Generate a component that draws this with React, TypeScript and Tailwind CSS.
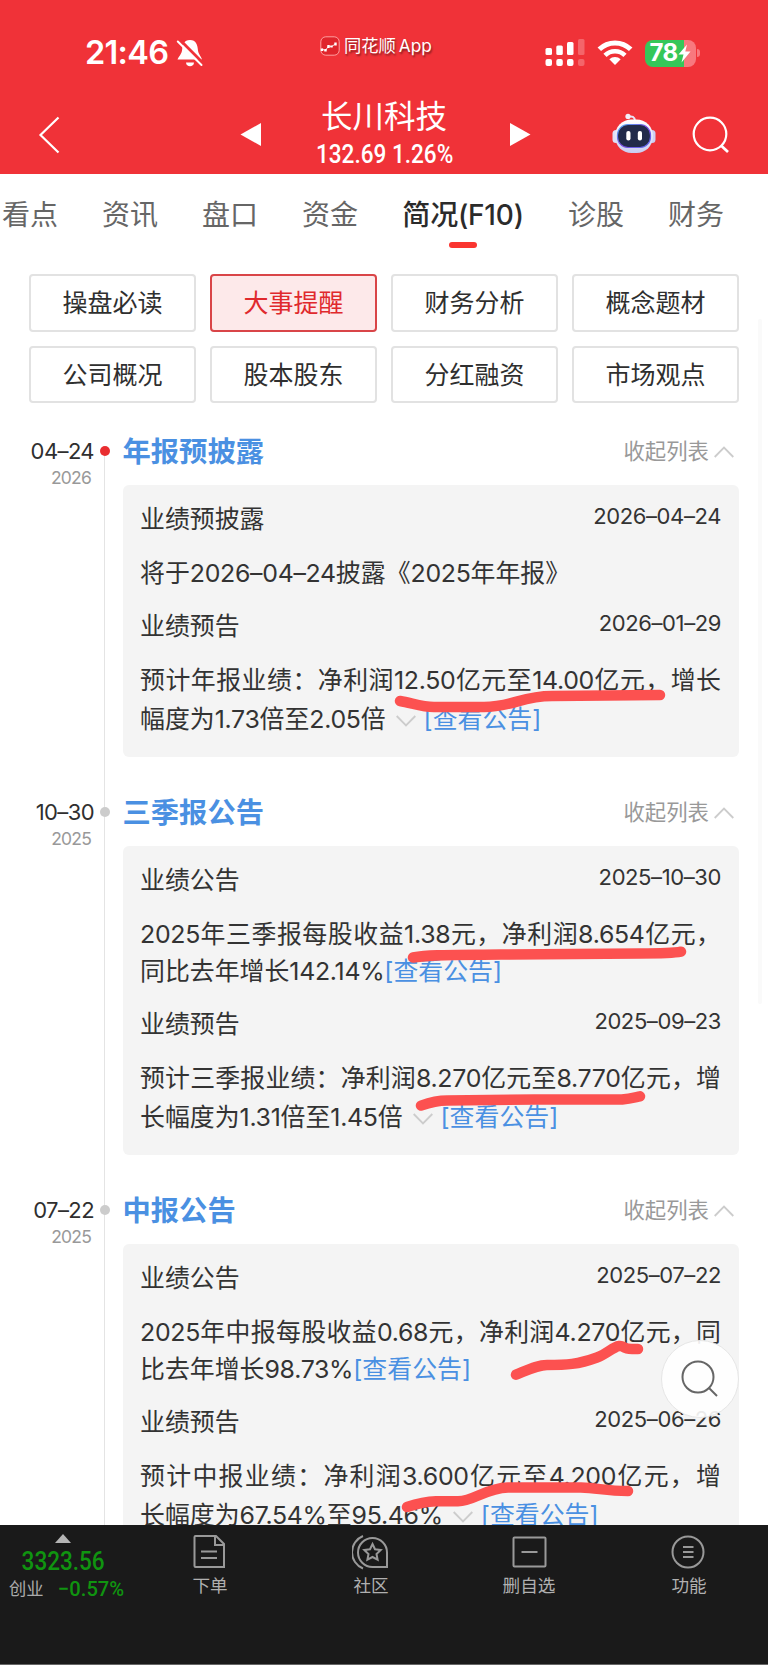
import { Fragment, type ReactNode } from 'react';
import clsx from 'clsx';

type Entry = {
  name: string;
  date: string;
  lines: string[];
  expandable?: boolean;
  link?: boolean;
};

type Section = {
  day: string;
  year: string;
  title: string;
  active?: boolean;
  entries: Entry[];
};

const TABS = ['看点', '资讯', '盘口', '资金', '简况(F10)', '诊股', '财务'];
const ACTIVE_TAB = '简况(F10)';

const FILTERS = ['操盘必读', '大事提醒', '财务分析', '概念题材', '公司概况', '股本股东', '分红融资', '市场观点'];
const ACTIVE_FILTER = '大事提醒';

const SECTIONS: Section[] = [
  {
    day: '04–24',
    year: '2026',
    title: '年报预披露',
    active: true,
    entries: [
      { name: '业绩预披露', date: '2026–04–24', lines: ['将于2026–04–24披露《2025年年报》'] },
      {
        name: '业绩预告',
        date: '2026–01–29',
        lines: ['预计年报业绩：净利润12.50亿元至14.00亿元，增长', '幅度为1.73倍至2.05倍'],
        expandable: true,
        link: true,
      },
    ],
  },
  {
    day: '10–30',
    year: '2025',
    title: '三季报公告',
    entries: [
      {
        name: '业绩公告',
        date: '2025–10–30',
        lines: ['2025年三季报每股收益1.38元，净利润8.654亿元，', '同比去年增长142.14%'],
        link: true,
      },
      {
        name: '业绩预告',
        date: '2025–09–23',
        lines: ['预计三季报业绩：净利润8.270亿元至8.770亿元，增', '长幅度为1.31倍至1.45倍'],
        expandable: true,
        link: true,
      },
    ],
  },
  {
    day: '07–22',
    year: '2025',
    title: '中报公告',
    entries: [
      {
        name: '业绩公告',
        date: '2025–07–22',
        lines: ['2025年中报每股收益0.68元，净利润4.270亿元，同', '比去年增长98.73%'],
        link: true,
      },
      {
        name: '业绩预告',
        date: '2025–06–26',
        lines: ['预计中报业绩：净利润3.600亿元至4.200亿元，增', '长幅度为67.54%至95.46%'],
        expandable: true,
        link: true,
      },
    ],
  },
];

// Hand-drawn marker strokes over the key figures
const MARKS = [
  'M400 701 C412 703 422 707 434 707 H484 C512 707 522 696 552 696 L660 695',
  'M413 957.5 C430 954.5 450 955 501 954.5 L640 953.5 C660 953.5 672 953.5 681 951.7',
  'M421 1105.6 C430 1102.5 438 1100.6 447 1100.6 L535 1099.5 H622 C630 1098.5 634 1097.5 640 1096.3',
  'M516 1374.7 C530 1369 538 1365 547 1365 C566 1365 578 1364.5 597 1357.5 C607 1354 613 1347 619 1346 C624 1345 622 1349 632 1349 H638',
  'M407 1507 C416 1504 428 1501.5 436 1501.3 H458 C474 1501 486 1488 508 1487.5 H581 C598 1488 606 1491 628 1491',
];

/* Latin digits set a little tighter than the Chinese text around them */
const Mixed = ({ text }: { text: string }) => (
  <>
    {text.split(/([\d.%–]+)/).map((part, i) =>
      i % 2 ? (
        <span key={i} className="tracking-[-0.012em]">{part}</span>
      ) : (
        <Fragment key={i}>{part}</Fragment>
      )
    )}
  </>
);

const StatusBar = () => (
  <div className="flex h-[52px] items-center">
    <span className="ml-[85px] w-[86px] text-[32.5px] leading-none font-semibold tracking-[-0.7px]">21:46</span>
    <svg className="ml-[5px] h-[28px] w-[28px]" viewBox="0 0 28 28">
      <path d="M14 1 C8 1 6.5 6 6.2 10 C6 15 3 17 1.5 20.5 H26 C25 17 22 15 21.8 10 C21.5 6 20 1 14 1Z" fill="#fff" />
      <path d="M10 23.5 H18 C18 26 16 27.3 14 27.3 C12 27.3 10 26 10 23.5Z" fill="#fff" />
      <path d="M3 0 L28 25" stroke="#f03238" strokeWidth="3" />
      <path d="M1.8 2.5 L25.5 26" stroke="#fff" strokeWidth="2" strokeLinecap="round" />
    </svg>
    <div className="mb-[15px] ml-[116px] flex items-center gap-[4px] self-center">
      <svg className="h-[20px] w-[20px]" viewBox="0 0 20 20">
        <rect x="0.8" y="0.8" width="18.4" height="18.4" rx="5" fill="#e0252c" stroke="#ffa0a0" />
        <path d="M2 12.5 V15 M5.5 13 V15.5 M8.5 9 V12 M11.5 9.5 V11.5 M15.5 6.5 V9.5" stroke="#fff" strokeWidth="2.4" />
        <path d="M2 13 L5.5 14.5 L8.5 10 L11.5 10.5 L15.5 8" stroke="#fff" strokeWidth="0.8" fill="none" />
      </svg>
      <span className="text-[17.3px] leading-none whitespace-nowrap [word-spacing:-2px] [text-shadow:1px_2px_2px_rgba(0,0,0,0.45)]">
        同花顺 App
      </span>
    </div>
    <svg className="ml-auto h-[28px] w-[40px]" viewBox="0 0 40 28" fill="#fff">
      <rect x="0.5" y="9" width="6.5" height="7" rx="1.5" />
      <rect x="11.3" y="6.5" width="6.5" height="9.5" rx="1.5" />
      <rect x="22" y="3" width="6.5" height="13" rx="1.5" />
      <rect x="33" y="0" width="6.5" height="16" rx="1.5" opacity="0.25" />
      <rect x="0.5" y="20" width="6.5" height="7" rx="2" />
      <rect x="11.3" y="20" width="6.5" height="7" rx="2" />
      <rect x="22" y="20" width="6.5" height="7" rx="2" />
      <rect x="33" y="20" width="6.5" height="7" rx="2" opacity="0.25" />
    </svg>
    <svg className="ml-[12px] h-[26px] w-[36px]" viewBox="0 0 36 26" fill="none" stroke="#fff">
      <path d="M2.3 9.3 A22.5 22.5 0 0 1 33.7 9.3" strokeWidth="5" />
      <path d="M8 15.3 A14.3 14.3 0 0 1 28 15.3" strokeWidth="4.6" />
      <path d="M18 25 L12.3 19.3 A8.2 8.2 0 0 1 23.7 19.3 Z" fill="#fff" stroke="none" />
    </svg>
    <div className="mr-[68px] ml-[12px] flex items-center">
      <div className="flex h-[27px] w-[51px] items-center overflow-hidden rounded-[8px] bg-linear-to-r from-[#35c759] from-77% to-[#f8787e] to-77% pl-[5px]">
        <span className="text-[24px] leading-none font-bold tracking-[-0.6px]">78</span>
        <svg className="h-[19px] w-[13px] shrink-0" viewBox="0 0 13 19">
          <path d="M9 0.5 L0.5 10.5 H5.5 L3.5 18.5 L12.5 7.5 H7.3 Z" fill="#fff" />
        </svg>
      </div>
      <div className="ml-[1.5px] h-[8px] w-[3px] rounded-r-[3px] bg-[#f8787e]" />
    </div>
  </div>
);

const Robot = () => (
  <svg className="h-[41px] w-[44px]" viewBox="0 0 44 41">
    <defs>
      <linearGradient id="shell" x1="0" y1="0" x2="0" y2="1">
        <stop offset="0" stopColor="#ffffff" />
        <stop offset="1" stopColor="#c9cdf2" />
      </linearGradient>
      <linearGradient id="rim" x1="0" y1="0" x2="1" y2="1">
        <stop offset="0" stopColor="#4fb2f5" />
        <stop offset="0.5" stopColor="#7c4be0" />
        <stop offset="1" stopColor="#5a6df0" />
      </linearGradient>
    </defs>
    <path d="M15.5 4 C20 2.5 23 4 23 8" fill="none" stroke="#e8e4f6" strokeWidth="2" />
    <circle cx="16" cy="3.4" r="2.6" fill="#f3effa" />
    <rect x="0.5" y="17" width="7" height="13" rx="3.5" fill="#dfe0f8" />
    <rect x="36.5" y="17" width="7" height="13" rx="3.5" fill="#cdd0f4" />
    <rect x="3" y="6.5" width="38" height="33.5" rx="16.5" fill="url(#shell)" />
    <rect x="5.5" y="11.5" width="33" height="23" rx="10.5" fill="#212a4a" stroke="url(#rim)" strokeWidth="1.2" />
    <rect x="14.3" y="18" width="4.2" height="9.5" rx="2" fill="#fff" />
    <rect x="25.8" y="18" width="4.2" height="9.5" rx="2" fill="#fff" />
  </svg>
);

const Header = () => (
  <header className="flex h-[174px] shrink-0 flex-col bg-[#f03238] pt-[27px] text-white">
    <StatusBar />
    <div className="flex items-start pt-[16px]">
      <svg className="mt-[20px] ml-[38px] h-[40px] w-[24px] shrink-0" viewBox="0 0 24 40">
        <path d="M20.5 2.5 L2.5 20 L20.5 37.5" fill="none" stroke="#fff" strokeWidth="2.2" />
      </svg>
      <svg className="mt-[27.5px] ml-[178px] h-[23px] w-[21px] shrink-0" viewBox="0 0 21 23">
        <path d="M0.5 11.5 L21 0 V23 Z" fill="#fff" />
      </svg>
      <div className="ml-[44px] flex w-[160px] flex-col items-center pt-px">
        <h1 className="mr-[2px] text-[31.5px] leading-[42px] whitespace-nowrap">长川科技</h1>
        <p className="mt-[2px] scale-x-[0.885] font-[Roboto] text-[25.5px] leading-[28px] font-medium whitespace-nowrap">132.69 1.26%</p>
      </div>
      <svg className="mt-[27.5px] ml-[45px] h-[23px] w-[21px] shrink-0" viewBox="0 0 21 23">
        <path d="M20.5 11.5 L0 0 V23 Z" fill="#fff" />
      </svg>
      <div className="mt-[18px] ml-[81px]">
        <Robot />
      </div>
      <svg className="mt-[20px] ml-[35px] h-[40px] w-[40px]" viewBox="0 0 40 40" fill="none" stroke="#fff" strokeWidth="2.2">
        <circle cx="19" cy="19" r="16.3" />
        <path d="M30 30.5 L37 37" strokeWidth="2.8" />
      </svg>
    </div>
  </header>
);

const Tabs = () => (
  <nav className="flex h-[86px] items-start gap-[44px] pt-[21px] pl-[2px] text-[28px] leading-[40px] text-[#666]">
    {TABS.map(tab => (
      <div key={tab} className="flex shrink-0 flex-col items-center">
        {tab === ACTIVE_TAB ? (
          <>
            <span className="w-[122px] text-center font-medium tracking-[-0.2px] whitespace-nowrap text-[#2b2b2b]">{tab}</span>
            <span className="mt-[7px] h-[6px] w-[28px] rounded-[3px] bg-[#fa3530]" />
          </>
        ) : (
          <span>{tab}</span>
        )}
      </div>
    ))}
  </nav>
);

const Filters = () => (
  <div className="mt-[14px] grid grid-cols-4 gap-x-[14.3px] gap-y-[14px] px-[29px]">
    {FILTERS.map(label => (
      <button
        key={label}
        className={clsx(
          'h-[57.5px] rounded-[4px] border-2 pt-[2px] text-[25px] leading-none',
          label === ACTIVE_FILTER ? 'border-[#d94548] bg-[#fde9ea] text-[#e0292d]' : 'border-[#e2e2e2] text-[#2f2f2f]'
        )}
      >
        {label}
      </button>
    ))}
  </div>
);

const Chevron = ({ up, className }: { up?: boolean; className?: string }) => (
  <svg className={clsx('h-[12px] w-[20px]', className)} viewBox="0 0 20 12">
    <path d={up ? 'M0.7 11 L10 1.5 L19.3 11' : 'M0.7 1 L10 10.5 L19.3 1'} fill="none" stroke="#ccc" strokeWidth="1.8" />
  </svg>
);

const EntryBlock = ({ entry }: { entry: Entry }) => {
  const last = entry.lines.length - 1;
  return (
    <>
      <div className="flex items-center justify-between leading-[37px]">
        <h3>{entry.name}</h3>
        <time className="mb-[6px] text-[22px] leading-[31px] tracking-[-0.4px]">{entry.date}</time>
      </div>
      <div className={clsx(entry.expandable && 'pb-[2px]')}>
        {entry.lines.map((line, i) => (
          <p
            key={line}
            className={clsx(
              'h-[37px] leading-[37px] whitespace-nowrap',
              i < last && '[text-align-last:justify]',
              i === last && entry.expandable && 'mt-[2px]'
            )}
          >
            <Mixed text={line} />
            {i === last && entry.expandable && <Chevron className="mr-[8px] ml-[10px] inline-block align-[1px]" />}
            {i === last && entry.link && <a className="text-[#4a90e2]">[查看公告]</a>}
          </p>
        ))}
      </div>
    </>
  );
};

const TimelineSection = ({ section }: { section: Section }) => (
  <section className="mb-[21.5px] flex">
    <div className="relative flex w-[122.5px] shrink-0 flex-col pt-[18.5px]">
      <span
        className={clsx(
          'absolute top-[28.5px] left-[99.5px] h-[10.5px] w-[10.5px] rounded-full',
          section.active ? 'bg-[#e92d30]' : 'bg-[#ccc]'
        )}
      />
      <span className="w-[94px] text-right text-[22px] leading-[30px] tracking-[-0.6px] text-[#2f2f2f]">{section.day}</span>
      <span className="mt-px w-[91px] text-right text-[17.5px] leading-[22px] tracking-[-0.8px] text-[#999]">{section.year}</span>
    </div>
    <div className="flex-1 pr-[29px]">
      <div className="flex h-[68px] items-center justify-between">
        <h2 className="pt-[2px] text-[28.3px] font-bold text-[#4a90e2]">{section.title}</h2>
        <button className="mr-[5px] flex items-center gap-[5px] text-[21.4px] text-[#999]">
          收起列表
          <Chevron up className="mt-[2px]" />
        </button>
      </div>
      <div className="flex flex-col gap-[16.5px] rounded-[6px] bg-[#f4f4f4] pt-[16px] pr-[18px] pb-[17px] pl-[17.5px] text-[24.9px] text-[#333]">
        {section.entries.map(entry => (
          <EntryBlock key={entry.name} entry={entry} />
        ))}
      </div>
    </div>
  </section>
);

const NavItem = ({ label, className, children }: { label: string; className: string; children: ReactNode }) => (
  <button className={clsx('flex w-[80px] flex-col items-center pt-[9px]', className)}>
    <svg className="h-[36px] w-[38px]" viewBox="0 0 38 36" fill="none" stroke="#999" strokeWidth="2">
      {children}
    </svg>
    <span className="mt-[5px] text-[17.6px] leading-[22px] text-[#b0b0b0]">{label}</span>
  </button>
);

const BottomBar = () => (
  <footer className="flex h-[140px] shrink-0 items-start border-b border-[#666] bg-[#1a1a1a]">
    <div className="flex w-[126px] shrink-0 flex-col items-center pt-[9px]">
      <svg className="h-[9px] w-[16px]" viewBox="0 0 16 9">
        <path d="M0 9 L8 0 L16 9 Z" fill="#b5b5b5" />
      </svg>
      <span className="mt-[5px] scale-x-[0.9] font-[Roboto] text-[25px] leading-[27px] font-medium text-[#109410]">3323.56</span>
      <div className="flex items-center self-stretch pt-px pl-[9px] leading-[26px] whitespace-nowrap">
        <span className="text-[17.3px] text-[#aaa]">创业</span>
        <span className="ml-[14px] origin-left scale-x-[0.96] font-[Roboto] text-[21px] font-medium text-[#109410]">−0.57%</span>
      </div>
    </div>
    <NavItem label="下单" className="ml-[44px]">
      <path d="M4.5 2 H25 L33 10 V33 H4.5 Q3.5 33 3.5 32 V3 Q3.5 2 4.5 2 Z M24 2 V11 H33 M10 17.5 H26 M10 24 H26" />
    </NavItem>
    <NavItem label="社区" className="ml-[81px]">
      <path d="M34.5 33 H20.5 A14.5 14.5 0 1 1 35 18.5 V33 Z" />
      <path d="M11 2 A17.5 17.5 0 0 0 11 34.5" />
      <path d="M20.5 10 L23 15.3 L28.7 16 L24.5 20 L25.6 25.7 L20.5 23 L15.4 25.7 L16.5 20 L12.3 16 L18 15.3 Z" />
    </NavItem>
    <NavItem label="删自选" className="ml-[78px]">
      <rect x="3.5" y="3.5" width="32" height="29" rx="1" />
      <path d="M11.5 18 H27.5" />
    </NavItem>
    <NavItem label="功能" className="ml-[80px]">
      <circle cx="18" cy="18" r="15.5" />
      <path d="M13 13 H23.5 M13 18 H23.5 M13 23 H23.5" />
    </NavItem>
  </footer>
);

export default function App() {
  return (
    <div
      lang="zh-CN"
      className="relative flex h-[1665px] w-[768px] flex-col overflow-hidden bg-white font-[Inter,'Noto_Sans_CJK_SC',sans-serif]"
    >
      <Header />

      <main className="relative h-[1351px] shrink-0 overflow-hidden">
        <Tabs />
        <Filters />
        <div className="relative mt-[14px]">
          {/* Timeline rail */}
          <div className="absolute top-[34px] left-[104px] h-[1200px] w-px bg-[#e4e4e4]" />
          {SECTIONS.map(section => (
            <TimelineSection key={section.title} section={section} />
          ))}
        </div>

        {/* Scroll indicator */}
        <div className="absolute top-[145px] left-[757.5px] h-[685px] w-[4.5px] rounded-full bg-[#fafafa]" />

        <button className="absolute top-[1166px] left-[661px] h-[78px] w-[78px] rounded-full border border-[#e6e6e6] bg-white/90">
          <svg className="h-full w-full" viewBox="0 0 76 76" fill="none" stroke="#666" strokeWidth="2">
            <circle cx="36" cy="36" r="15.5" />
            <path d="M46.5 46.5 L55 55" />
          </svg>
        </button>
      </main>

      <BottomBar />

      <svg
        className="pointer-events-none absolute inset-0 h-full w-full"
        viewBox="0 0 768 1665"
        fill="none"
        stroke="#fc5150"
        strokeWidth="10.5"
        strokeLinecap="round"
        strokeLinejoin="round"
      >
        {MARKS.map(d => (
          <path key={d} d={d} />
        ))}
      </svg>
    </div>
  );
}
